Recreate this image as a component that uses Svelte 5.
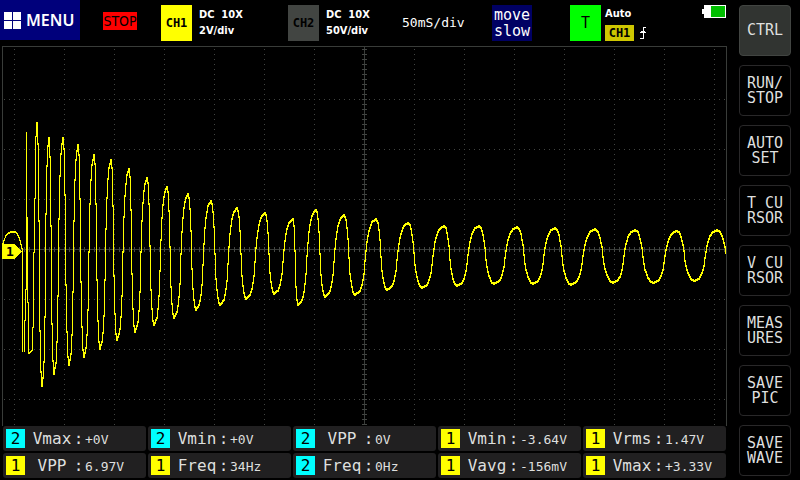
<style>
:global(body) {
	margin: 0;
	background-color: #000;
}

.scope {
	display: flex;
	align-items: flex-start;
	color: #fff;
	font-family: "DejaVu Sans Mono", monospace;
}

button {
	margin: 0;
	padding: 0;
	border: 0;
	color: inherit;
	font: inherit;
	cursor: pointer;
}

.main {
	flex: 1;
	min-width: 0;
}

.topbar {
	display: grid;
	grid-template-columns: 80px 81px 127px 114px 90px 78px auto 1fr;
	align-items: start;
	height: 46px;
	padding-right: 2px;
}

.menu {
	display: flex;
	align-items: center;
	gap: 5px;
	height: 40px;
	padding-left: 4px;
	background-color: #00007b;
	font: 600 16px/20px "Noto Sans", sans-serif;
}

.run-state {
	padding: 12px 0 0 23px;
}

.stop {
	display: block;
	width: 34px;
	height: 18px;
	background-color: #f00;
	color: #000;
	font: 14px/18px "DejaVu Sans Condensed", "DejaVu Sans", sans-serif;
}

.block {
	display: flex;
	gap: 7px;
	padding-top: 5px;
	font: bold 11px/16px "DejaVu Sans Condensed", "DejaVu Sans", sans-serif;
}

.tag {
	width: 31px;
	height: 36px;
	color: #000;
	font: bold 12px/36px "DejaVu Sans Mono", monospace;
}

.yellow {
	background-color: #ff0;
}

.cyan {
	background-color: #0ff;
}

.gray {
	background-color: #424542;
}

.green {
	background-color: #0f0;
	font-size: 15px;
	font-weight: normal;
}

.lines {
	padding-top: 2px;
	white-space: pre;
}

.timebase {
	padding-top: 15px;
	font-size: 13px;
	line-height: 16px;
}

.move {
	width: 40px;
	height: 36px;
	margin-top: 5px;
	background-color: #000063;
	font-size: 15px;
	line-height: 16px;
	white-space: pre;
}

.trigger {
	gap: 4px;
}

.auto {
	padding-top: 1px;
}

.source {
	display: flex;
	align-items: center;
	gap: 5px;
	padding-top: 3px;
}

.source span {
	width: 29px;
	background-color: #cec600;
	color: #000;
	font: bold 12px/16px "DejaVu Sans Mono", monospace;
	text-align: center;
}

.battery {
	margin-top: 5px;
	justify-self: end;
}

.graph {
	display: block;
	width: 100%;
	height: auto;
	shape-rendering: crispEdges;
}

.frame {
	fill: none;
	stroke: #393c39;
}

.dots {
	fill: none;
	stroke: #424542;
	stroke-dasharray: 1 4;
}

.ticks {
	fill: none;
	stroke: #424542;
	stroke-width: 5;
	stroke-dasharray: 1 4;
}

.trace {
	fill: none;
	stroke: #ff0;
}

.marker {
	fill: #ff0;
}

.marker-text {
	font-size: 13px;
	font-weight: bold;
	text-anchor: middle;
}

.measures {
	display: grid;
	grid-template-columns: repeat(5, 1fr);
	gap: 2px;
	padding: 0 2px 0 3px;
}

.measure {
	display: flex;
	align-items: center;
	height: 19px;
	padding: 3px;
	border-radius: 3px;
	background-color: #212021;
	color: #dedfde;
	font-size: 16px;
	line-height: 19px;
	white-space: nowrap;
}

.source-no {
	width: 19px;
	color: #000;
	text-align: center;
}

.name {
	width: 40px;
	margin-left: 7px;
	text-align: center;
}

.colon {
	width: 13px;
	text-align: center;
}

.value {
	padding-top: 2px;
	font-size: 13px;
}

.side {
	display: flex;
	flex-direction: column;
	gap: 9px;
	padding: 5px 9px 4px 11px;
}

.side button {
	box-sizing: border-box;
	width: 52px;
	height: 51px;
	border: 1px solid #292829;
	border-radius: 4px;
	background-color: #000;
	color: #dedfde;
	font-size: 15px;
	line-height: 15px;
	white-space: pre;
}

.side .active {
	border-color: #424542;
	background-color: #313431;
}
</style>

<div class="scope">
	<main class="main">
		<header class="topbar">
			<button class="menu">
				<svg width="17" height="17" viewBox="0 0 17 17" aria-hidden="true">
					<path fill="#fff" d="M0 0h8v8H0zM9 0h8v8H9zM0 9h8v8H0zM9 9h8v8H9z" />
				</svg>
				MENU
			</button>
			<div class="run-state"><button class="stop">STOP</button></div>
			{#each channels as ch}
				<div class="block">
					<button class={`tag ${ch.color}`}>{ch.name}</button>
					<div class="lines">{ch.text}</div>
				</div>
			{/each}
			<div class="timebase">50mS/div</div>
			<button class="move">{'move\nslow'}</button>
			<div class="block trigger">
				<button class="tag green">T</button>
				<div>
					<div class="auto">Auto</div>
					<div class="source">
						<span>CH1</span>
						<svg width="8" height="12" viewBox="0 0 8 12" shape-rendering="crispEdges" aria-hidden="true">
							<path fill="#fff" d="M4 0H7V1H5V12H1V11H4V6H1V5H2V4H4zM5 4H6V5H7V6H5z" />
						</svg>
					</div>
				</div>
			</div>
			<svg class="battery" width="24" height="13" viewBox="0 0 24 13" role="img" aria-label="Battery">
				<path fill="#fff" d="M2 0H24V13H2V9H0V4H2z" />
				<path fill="#00be00" d="M9 1H23V12H9z" />
			</svg>
		</header>

		<svg class="graph" viewBox="0 0 728 380" role="img" aria-label="Waveform">
			{#each columns as x}
				<path class="dots" d={`M${x}.5 3V380`} />
			{/each}
			{#each rows as y}
				<path class="dots" d={`M4 ${y}.5H726`} />
			{/each}
			<path class="frame" d="M2.5 380V.5H726.5V380M2 203.500H726M364.500 0V379" />
			<path class="ticks" d="M4 203.500H726M364.500 3V380" />
			<path class="trace" d={trace} />
			<path class="marker" d="M2 198H15L22 205.500L15 213H2z" />
			<text class="marker-text" x="10" y="210">1</text>
		</svg>

		<section class="measures">
			{#each measures as m}
				<div class="measure">
					<span class={`source-no ${m[0] === 1 ? 'yellow' : 'cyan'}`}>{m[0]}</span>
					<span class="name">{m[1]}</span>
					<span class="colon">:</span>
					<span class="value">{m[2]}</span>
				</div>
			{/each}
		</section>
	</main>

	<nav class="side">
		{#each buttons as label, i}
			<button class:active={i === 0}>{label}</button>
		{/each}
	</nav>
</div>

<script>
const channels = [
	{ name: 'CH1', color: 'yellow', text: 'DC  10X\n2V/div' },
	{ name: 'CH2', color: 'gray', text: 'DC  10X\n50V/div' }
];

const buttons = ['CTRL', 'RUN/\nSTOP', 'AUTO\nSET', 'T CU\nRSOR', 'V CU\nRSOR', 'MEAS\nURES', 'SAVE\nPIC', 'SAVE\nWAVE'];

const measures = [
	[2, 'Vmax', '+0V'],
	[2, 'Vmin', '+0V'],
	[2, 'VPP', '0V'],
	[1, 'Vmin', '-3.64V'],
	[1, 'Vrms', '1.47V'],
	[1, 'VPP', '6.97V'],
	[1, 'Freq', '34Hz'],
	[2, 'Freq', '0Hz'],
	[1, 'Vavg', '-156mV'],
	[1, 'Vmax', '+3.33V']
];

const columns = [];
for (let x = 14; x < 726; x += 50) columns.push(x);
const rows = [53, 103, 153, 253, 303, 353];

// start of the record, one [x, top, bottom] per pixel column
const start = [
	[2, 197, 200], [3, 194, 198], [4, 192, 195], [5, 189, 192], [6, 188, 190], [7, 187, 189],
	[8, 186, 188], [9, 186, 188], [10, 185, 187], [11, 185, 187], [12, 185, 187], [13, 185, 187],
	[14, 185, 187], [15, 185, 187], [16, 186, 188], [17, 187, 190], [18, 189, 192], [19, 191, 195],
	[20, 194, 199], [21, 198, 203], [22, 202, 306], [24, 274, 306], [25, 243, 275], [26, 86, 244],
	[27, 171, 257], [28, 256, 308], [29, 306, 308], [30, 305, 307], [31, 304, 306], [32, 281, 305],
	[33, 206, 282], [34, 152, 207], [35, 90, 153], [36, 76, 91]
];

// turning points of the ringing, peak and trough in turn
const turns = [
	[36, 76], [41, 339], [48, 91], [53, 327], [62, 91], [68, 318], [77, 98], [83, 310],
	[93, 108], [99, 302], [110, 113], [116, 293], [128, 122], [134, 285], [146, 131], [153, 278],
	[166, 140], [173, 271], [187, 147], [195, 263], [210, 154], [219, 258], [236, 161], [245, 252],
	[264, 166], [273, 247], [292, 172], [297, 258], [315, 163], [324, 250], [343, 168], [354, 248],
	[375, 172], [386, 243], [407, 176], [421, 241], [443, 179], [456, 239], [478, 179], [493, 237],
	[516, 180], [532, 237], [554, 181], [570, 238], [594, 182], [612, 236], [634, 183], [652, 236],
	[676, 184], [693, 234], [716, 183], [737, 234]
];

const rise = [[0, 0], [0.23, 0.05], [0.34, 0.14], [0.43, 0.28], [0.49, 0.49], [0.53, 0.6], [0.6, 0.755], [0.69, 0.87], [0.81, 0.957], [1, 1]];
const fall = [[0, 0], [0.16, 0.04], [0.26, 0.14], [0.39, 0.34], [0.47, 0.59], [0.55, 0.74], [0.68, 0.87], [0.84, 0.97], [1, 1]];

function shape(table, t) {
	const i = Math.max(1, table.findIndex((p) => p[0] >= t));
	const [t0, v0] = table[i - 1];
	const [t1, v1] = table[i];
	return v0 + ((v1 - v0) * (t - t0)) / (t1 - t0);
}

function drawTrace() {
	let d = start.map(([x, top, bottom]) => `M${x}.5 ${top}V${bottom}`).join('');
	let last = 76;
	for (let i = 0; i < turns.length - 1; i++) {
		const [x0, y0] = turns[i];
		const [x1, y1] = turns[i + 1];
		for (let x = x0 + 1; x <= x1 && x < 726; x++) {
			const y = Math.round(y0 + (y1 - y0) * shape(i % 2 ? rise : fall, (x - x0) / (x1 - x0)));
			d += `M${x}.5 ${Math.min(last, y)}V${Math.max(last, y) + 2}`;
			last = y;
		}
	}
	return d;
}

const trace = drawTrace();
</script>
